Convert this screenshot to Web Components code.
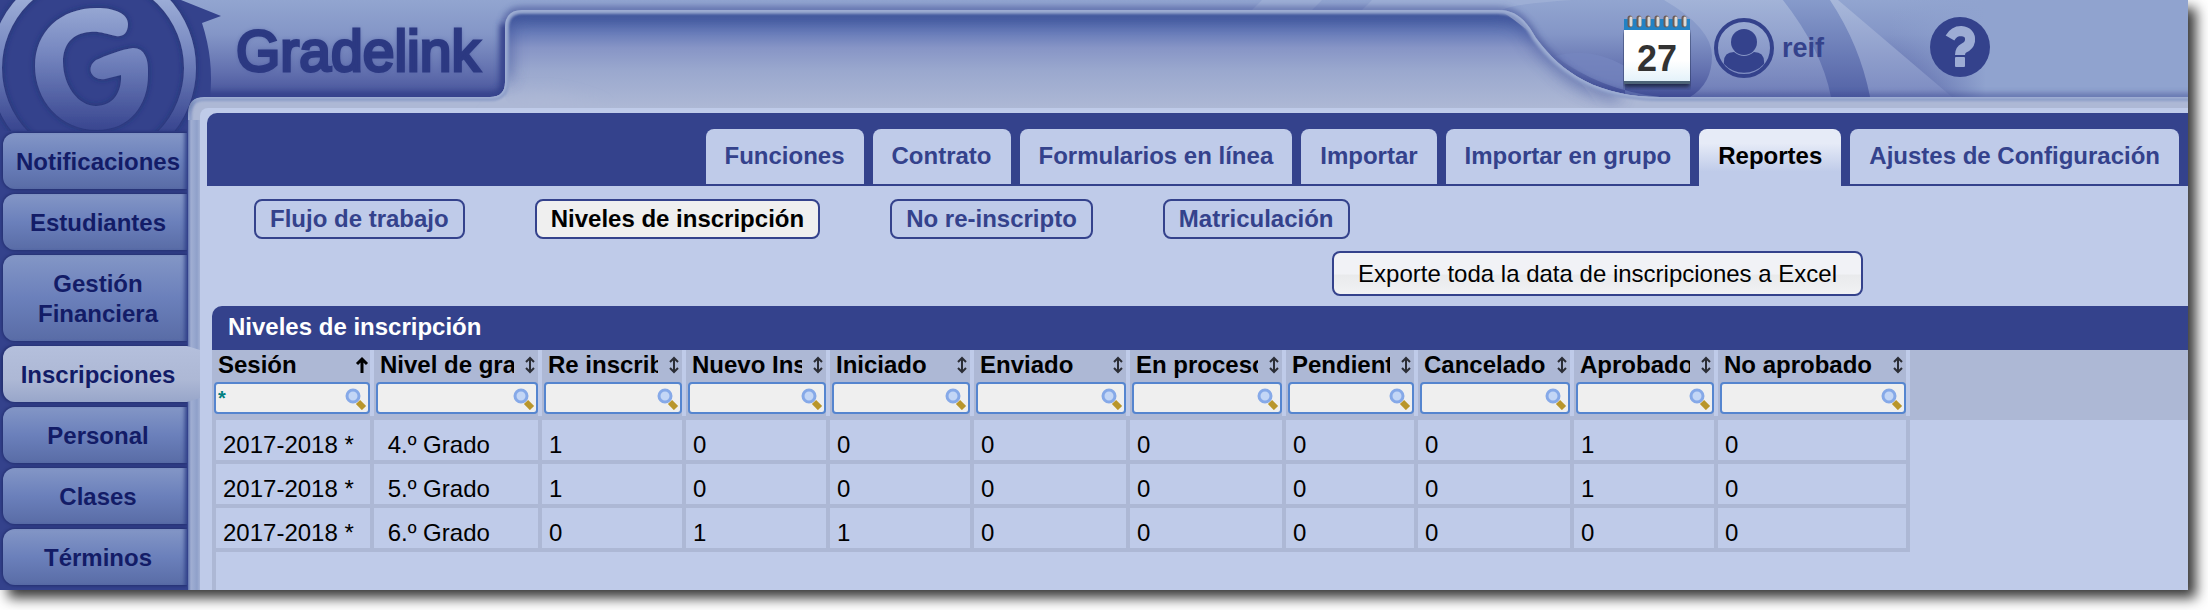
<!DOCTYPE html>
<html lang="es">
<head>
<meta charset="utf-8">
<title>Gradelink - Niveles de inscripción</title>
<style>
    :root {
        --navy: #34428c;
        --panel: #bfcbe9;
        --steel: #adb8d5;
        --ink: #131c67;
    }
    body {
        margin: 0;
        background: #fff;
        font-family: "Liberation Sans", Arial, sans-serif;
        font-size: 24px;
        line-height: 28px;
        overflow: hidden;
    }
</style>
</head>
<body>
<gl-app>
    <gl-banner slot="banner"></gl-banner>
    <gl-logo slot="side"></gl-logo>
    <gl-side-nav slot="side">
        <gl-side-item>Notificaciones</gl-side-item>
        <gl-side-item>Estudiantes</gl-side-item>
        <gl-side-item>Gestión Financiera</gl-side-item>
        <gl-side-item active>Inscripciones</gl-side-item>
        <gl-side-item>Personal</gl-side-item>
        <gl-side-item>Clases</gl-side-item>
        <gl-side-item>Términos</gl-side-item>
    </gl-side-nav>

    <gl-header slot="header" day="27">reif</gl-header>

    <gl-tabs>
        <gl-tab>Funciones</gl-tab>
        <gl-tab>Contrato</gl-tab>
        <gl-tab>Formularios en línea</gl-tab>
        <gl-tab>Importar</gl-tab>
        <gl-tab>Importar en grupo</gl-tab>
        <gl-tab active>Reportes</gl-tab>
        <gl-tab>Ajustes de Configuración</gl-tab>
    </gl-tabs>
    <gl-pills>
        <gl-pill>Flujo de trabajo</gl-pill>
        <gl-pill active>Niveles de inscripción</gl-pill>
        <gl-pill>No re-inscripto</gl-pill>
        <gl-pill>Matriculación</gl-pill>
    </gl-pills>
    <gl-export>Exporte toda la data de inscripciones a Excel</gl-export>
    <gl-grid>Niveles de inscripción</gl-grid>
</gl-app>

<script>
    // every component renders its own static template in an open shadow root
    class GlElement extends HTMLElement {
        constructor() {
            super()
            this.attachShadow({ mode: 'open' })
        }
        connectedCallback() {
            this.shadowRoot.innerHTML = this.render()
        }
    }

    class GlApp extends GlElement {
        render() {
            return `
            <style>
                :host {
                    display: grid;
                    grid-template-columns: 188px minmax(0, 1fr);
                    height: calc(100vh - 20px);
                    margin: 0 20px 20px 0;
                    position: relative;
                    overflow: hidden;
                    background: var(--navy);
                    box-shadow: 8px 8px 12px rgba(0, 0, 0, .78);
                }
                aside, .body { position: relative; min-width: 0; }
                aside { z-index: 1; }
                .body { display: flex; flex-direction: column; }
                .frame {
                    flex: 1;
                    display: flex;
                    padding-left: 12px;
                    background: linear-gradient(90deg, #6376af 0, #a0aed2 3px, #98a8cf 6px, #8fa0c9 9px, #a3b1d4 12px) 0 12px no-repeat;
                }
                main {
                    flex: 1;
                    min-width: 0;
                    display: flex;
                    flex-direction: column;
                    padding: 5px 0 0 7px;
                    background: var(--panel);
                    border-top-left-radius: 8px;
                }
            </style>
            <slot name="banner"></slot>
            <aside><slot name="side"></slot></aside>
            <div class="body">
                <slot name="header"></slot>
                <div class="frame"><main><slot></slot></main></div>
            </div>`
        }
    }

    // decorative artwork behind the logo and the header
    class GlBanner extends GlElement {
        render() {
            const edge = 'M188 140V113Q188 97 204 97H490Q505 97 505 82V28Q505 10 522 10H1498C1516 10 1526 20 1536 38C1562 74 1600 97 1660 97H4000'
            return `
            <style>
                :host { position: absolute; top: 0; left: 0; right: 0; height: 130px; overflow: hidden; }
                svg { display: block; width: 100%; height: 130px; }
            </style>
            <svg aria-hidden="true">
                <defs>
                    <linearGradient id="sky" x1="0" y1="0" x2="0" y2="97" gradientUnits="userSpaceOnUse">
                        <stop offset="0" stop-color="#92a5d0"/><stop offset=".35" stop-color="#8496c7"/>
                        <stop offset=".75" stop-color="#616fae"/><stop offset="1" stop-color="#46529a"/>
                    </linearGradient>
                    <linearGradient id="well" x1="0" y1="14" x2="0" y2="108" gradientUnits="userSpaceOnUse">
                        <stop offset="0" stop-color="#455c9f"/><stop offset=".06" stop-color="#4b62a5"/><stop offset=".2" stop-color="#687cb9"/>
                        <stop offset=".36" stop-color="#8795c6"/><stop offset=".6" stop-color="#9aa8ce"/>
                        <stop offset="1" stop-color="#adb8d5"/>
                    </linearGradient>
                    <linearGradient id="far" x1="1890" x2="2050" y1="0" y2="0" gradientUnits="userSpaceOnUse">
                        <stop offset="0" stop-color="#90a3cf" stop-opacity="0"/><stop offset=".6" stop-color="#90a3cf"/>
                    </linearGradient>
                    <linearGradient id="beam" x1="0" x2="0" y1="0" y2="1">
                        <stop offset="0" stop-color="#a8b8da"/><stop offset="1" stop-color="#7c8bc1"/>
                    </linearGradient>
                    <linearGradient id="band" x1="0" x2="0" y1="0" y2="1">
                        <stop offset="0" stop-color="#879bcb"/><stop offset="1" stop-color="#5362a6"/>
                    </linearGradient>
                    <filter id="b1" x="-10%" y="-60%" width="120%" height="220%"><feGaussianBlur stdDeviation="1"/></filter>
                    <filter id="b2" x="-10%" y="-60%" width="120%" height="220%"><feGaussianBlur stdDeviation="3"/></filter>
                    <filter id="b8" x="-10%" y="-60%" width="120%" height="220%"><feGaussianBlur stdDeviation="8"/></filter>
                    <clipPath id="shape"><path d="${edge}V140Z"/></clipPath>
                </defs>
                <rect width="4000" height="130" fill="url(#sky)"/>
                <path d="M1262 0h60l-10 10h-60zM1372 0h200q-60 4-70 10h-140z" fill="#a5b5d9" opacity=".6"/>
                <path d="M1555 56Q1590 46 1625 66V97H1660Q1600 90 1555 56z" fill="#7586bf" opacity=".8"/>
                <path d="M1664 0Q1712 28 1712 56Q1712 84 1690 97H1835Q1825 50 1783 0z" fill="url(#beam)" opacity=".75"/>
                <path d="M1783 0Q1822 50 1831 97H1870Q1860 45 1830 0z" fill="url(#band)"/>
                <path d="M1800 0H4000V97H1870Q1860 45 1830 0z" fill="url(#far)"/>
                <path d="M1830 0Q1860 45 1870 97H1952L1838 0z" fill="url(#beam)"/>
                <path d="${edge}" fill="none" stroke="#34428c" stroke-width="6" opacity=".6" filter="url(#b2)"/>
                <path d="M188 140V113Q188 97 204 97H490Q505 97 505 82V24" fill="none" stroke="#34428c" stroke-width="10" filter="url(#b2)"/>
                <path d="${edge}V140H188Z" fill="#adb8d5"/>
                <g clip-path="url(#shape)">
                    <path d="M505 97V10H1500Q1560 50 1600 108H540Q505 108 505 97z" fill="url(#well)"/>
                    <path d="M470 150L505 102Q545 86 600 110V150z" fill="#adb8d5" filter="url(#b8)"/>
                    <path d="M505 80V28Q505 10 522 10H1498C1516 10 1526 20 1536 38C1562 74 1590 90 1620 94" fill="none" stroke="#3c5099" stroke-width="14" opacity=".6" filter="url(#b8)"/>
                    <path d="${edge}" fill="none" stroke="#8b9cc8" stroke-width="8" filter="url(#b1)"/>
                    <path d="${edge}" fill="none" stroke="#a3b2d6" stroke-width="3" filter="url(#b1)"/>
                </g>
            </svg>`
        }
    }

    class GlLogo extends GlElement {
        render() {
            return `
            <style>
                :host { display: block; height: 133px; }
                svg { position: absolute; top: 0; left: 0; }
                .name {
                    position: absolute;
                    top: 16px;
                    left: 236px;
                    font-size: 57px;
                    line-height: 70px;
                    color: #2c3982;
                    -webkit-text-stroke: 3px #2c3982;
                    text-shadow: 0 0 4px #4a589f;
                }
            </style>
            <svg width="224" height="131" viewBox="0 0 224 131" aria-hidden="true">
                <defs>
                    <linearGradient id="g" x1="0" y1="0" x2="0" y2="131" gradientUnits="userSpaceOnUse">
                        <stop offset="0" stop-color="#9bacd6"/><stop offset=".4" stop-color="#7687c0"/><stop offset="1" stop-color="#38458f"/>
                    </linearGradient>
                    <filter id="s" x="-20%" y="-20%" width="140%" height="140%">
                        <feDropShadow dx="0" dy="0" stdDeviation="3" flood-color="#1d2a68" flood-opacity=".8"/>
                    </filter>
                </defs>
                <path d="M0 0H181L221 16L202 23Q214 60 210 97H204Q188 97 188 113V131H0z" fill="#34428c"/>
                <circle cx="93" cy="68" r="97" fill="none" stroke="url(#g)" stroke-width="12" filter="url(#s)"/>
                <path d="M116 36C105 34 100 31 90 32C72 33 63 45 63 62C63 85 78 106 96 106C113 106 122 92 121 75L105 79C92 81 85 68 96 60C105 56 122 49 133 48C145 48 149 60 148 75C148 105 130 130 97 130C60 130 35 100 35 66C35 32 60 8 97 8C115 8 128 14 128 24C128 34 122 37 116 36Z" fill="url(#g)" filter="url(#s)"/>
            </svg>
            <span class="name">Gradelink</span>`
        }
    }

    class GlSideNav extends GlElement {
        render() {
            return `
            <style>
                :host { display: block; }
                nav { display: flex; flex-direction: column; gap: 5px; padding-left: 3px; }
            </style>
            <nav><slot></slot></nav>`
        }
    }

    class GlSideItem extends GlElement {
        render() {
            return `
            <style>
                :host { display: block; margin-right: 1px; position: relative; }
                a {
                    display: flex;
                    align-items: center;
                    justify-content: center;
                    box-sizing: border-box;
                    min-height: 56px;
                    padding: 14px 4px 12px 10px;
                    border-radius: 12px 0 0 12px;
                    color: var(--ink);
                    font-weight: bold;
                    line-height: 30px;
                    text-align: center;
                    text-decoration: none;
                    background: linear-gradient(#8396c6, #6b80bb 50%, #596ca6);
                    box-shadow: inset -5px 0 4px -3px #2f3f88, 0 0 3px 1px #232f70;
                    clip-path: inset(-4px 0 -4px -4px);
                }
                :host([active]) { margin-right: -12px; }
                :host([active]) a {
                    padding-right: 17px;
                    background: linear-gradient(#b4bfdc, #adb8d5 60%, #98a6ca);
                    box-shadow: -1px 0 3px 1px #232f70;
                    clip-path: polygon(-4px -4px, 184px -4px, 184px 0, 100% 4px, 100% 52px, 184px 56px, 184px 60px, -4px 60px);
                }
            </style>
            <a href="#"><slot></slot></a>`
        }
    }

    class GlHeader extends GlElement {
        render() {
            return `
            <style>
                :host {
                    display: flex;
                    align-items: flex-start;
                    justify-content: flex-end;
                    height: 108px;
                    box-sizing: border-box;
                    padding: 14px 198px 0 0;
                    color: var(--navy);
                    font-weight: bold;
                }
                a { display: flex; align-items: center; color: inherit; text-decoration: none; }
                svg { display: block; }
                .day { position: relative; width: 68px; height: 76px; margin-right: 23px; }
                .day svg { position: absolute; inset: 0; }
                .day span {
                    position: relative;
                    width: 100%;
                    padding-top: 14px;
                    text-align: center;
                    font-size: 36px;
                    line-height: 40px;
                    color: #333;
                }
                .user { gap: 8px; margin: 4px 106px 0 0; font-size: 27px; }
                .help { margin-top: 3px; }
            </style>
            <a class="day" href="#" aria-label="Calendario">
                <svg width="68" height="76" viewBox="0 0 68 76">
                    <defs>
                        <linearGradient id="pg" x1="0" y1="0" x2="0" y2="1"><stop offset=".6" stop-color="#fff"/><stop offset="1" stop-color="#e4f2fa"/></linearGradient>
                        <filter id="sh" x="-20%" y="-20%" width="140%" height="140%"><feGaussianBlur stdDeviation="2"/></filter>
                    </defs>
                    <rect x="1" y="18" width="66" height="55" fill="#1c2546" filter="url(#sh)"/>
                    <rect x="1" y="5" width="66" height="12" fill="#2282c4"/>
                    <rect x="1" y="16" width="66" height="51" fill="url(#pg)"/>
                    <path d="M1 67h66v3H1z" fill="#4d6478"/>
                    <g stroke="#6b5c58" stroke-width="5" stroke-linecap="round"><path d="M7 4v7M16 4v7M25 4v7M34 4v7M43 4v7M52 4v7M61 4v7"/></g>
                    <g stroke="#dcd9d6" stroke-width="3" stroke-linecap="round"><path d="M8 4v7M17 4v7M26 4v7M35 4v7M44 4v7M53 4v7M62 4v7"/></g>
                </svg>
                <span>${this.getAttribute('day')}</span>
            </a>
            <a class="user" href="#">
                <svg width="60" height="60" viewBox="0 0 60 60">
                    <circle cx="30" cy="30" r="28" fill="none" stroke="#34428c" stroke-width="4"/>
                    <circle cx="30" cy="24" r="13" fill="#34428c"/>
                    <path d="M10 46Q9 34 20 34Q30 42 40 34Q51 34 50 46A27 27 0 0 1 10 46z" fill="#34428c"/>
                </svg>
                <slot></slot>
            </a>
            <a class="help" href="#" aria-label="Ayuda">
                <svg width="60" height="60" viewBox="0 0 60 60">
                    <circle cx="30" cy="30" r="30" fill="#34428c"/>
                    <path d="M20 21Q24 14 31 14Q41 15 40 24Q39 29 34 31Q30 33 30 38" fill="none" stroke="#9dacd4" stroke-width="10"/>
                    <rect x="25" y="40" width="10" height="10" rx="1" fill="#9dacd4"/>
                </svg>
            </a>`
        }
    }

    class GlTabs extends GlElement {
        render() {
            return `
            <style>
                :host { display: block; }
                nav {
                    display: flex;
                    justify-content: flex-end;
                    gap: 9px;
                    height: 57px;
                    padding: 16px 9px 0 0;
                    background: var(--navy);
                    border-top-left-radius: 10px;
                }
            </style>
            <nav><slot></slot></nav>`
        }
    }

    class GlTab extends GlElement {
        render() {
            return `
            <style>
                :host { display: block; }
                a {
                    display: block;
                    padding: 13px 19px 14px;
                    border-radius: 8px 8px 0 0;
                    background: var(--panel);
                    color: var(--navy);
                    font-weight: bold;
                    white-space: nowrap;
                    text-decoration: none;
                }
                :host([active]) a {
                    padding-bottom: 16px;
                    color: #000;
                    background: linear-gradient(#e6ebf7 25%, var(--panel) 75%);
                }
            </style>
            <a href="#"><slot></slot></a>`
        }
    }

    class GlPills extends GlElement {
        render() {
            return `
            <style>
                :host { display: flex; gap: 70px; padding: 13px 0 0 47px; }
            </style>
            <slot></slot>`
        }
    }

    class GlPill extends GlElement {
        render() {
            return `
            <style>
                :host { display: block; }
                a {
                    display: block;
                    padding: 4px 14px;
                    border: 2px solid var(--navy);
                    border-radius: 8px;
                    color: var(--navy);
                    font-weight: bold;
                    white-space: nowrap;
                    text-decoration: none;
                }
                :host([active]) a { background: #efefef; color: #000; }
            </style>
            <a href="#"><slot></slot></a>`
        }
    }

    class GlExport extends GlElement {
        render() {
            return `
            <style>
                :host { display: flex; justify-content: flex-end; padding: 12px 325px 10px 0; }
                button {
                    padding: 7px 24px 6px;
                    border: 2px solid var(--navy);
                    border-radius: 8px;
                    background: linear-gradient(#f1f2f6 50%, #e9eaec 55%, #f1f2f4);
                    color: #000;
                    font: inherit;
                }
            </style>
            <button type="button"><slot></slot></button>`
        }
    }

    class GlGrid extends GlElement {
        render() {
            const cols = [
                ['Sesión', 162], ['Nivel de grado', 168], ['Re inscrib', 144], ['Nuevo Ins', 144],
                ['Iniciado', 144], ['Enviado', 156], ['En proceso', 156], ['Pendiente', 132],
                ['Cancelado', 156], ['Aprobado', 144], ['No aprobado', 192]
            ]
            const rows = [
                ['2017-2018 *', '&nbsp;4.º Grado', 1, 0, 0, 0, 0, 0, 0, 1, 0],
                ['2017-2018 *', '&nbsp;5.º Grado', 1, 0, 0, 0, 0, 0, 0, 1, 0],
                ['2017-2018 *', '&nbsp;6.º Grado', 0, 1, 1, 0, 0, 0, 0, 0, 0]
            ]
            const up = '<svg width="14" height="18" viewBox="0 0 14 18"><path d="M7 17V4M2 8L7 3L12 8" fill="none" stroke="#000" stroke-width="3"/></svg>'
            const both = '<svg width="14" height="18" viewBox="0 0 14 18"><path d="M7 3V15M3 6L7 2L11 6M3 12L7 16L11 12" fill="none" stroke="#2b2d35" stroke-width="2"/></svg>'
            const lens = '<svg class="lens" width="22" height="22" viewBox="0 0 22 22"><path d="M13 14L19 20" stroke="#b9962b" stroke-width="6"/><circle cx="8" cy="8" r="6" fill="#c3d6f6" stroke="#86a9e8" stroke-width="3"/></svg>'

            const head = cols.map(([name], i) => `
                <th scope="col">
                    <button type="button"><span>${name}</span>${i ? both : up}</button>
                    <div class="filter"><input type="text" aria-label="Filtrar ${name}" value="${i ? '' : '*'}">${lens}</div>
                </th>`).join('')
            const body = rows.map(r => `<tr>${r.map(c => `<td>${c}</td>`).join('')}</tr>`).join('')

            return `
            <style>
                :host { flex: 1; display: flex; flex-direction: column; min-height: 0; margin-left: 5px; }
                h2 {
                    margin: 0;
                    padding: 7px 16px 9px;
                    border-top-left-radius: 10px;
                    background: var(--navy);
                    color: #fff;
                    font-size: 24px;
                    line-height: 28px;
                }
                .wrap { background: linear-gradient(var(--steel) 70px, var(--panel) 70px); }
                .rest { flex: 1; border-left: 4px solid var(--steel); }
                table { table-layout: fixed; width: 1698px; border-collapse: separate; border-spacing: 0; }
                th {
                    height: 66px;
                    padding: 0;
                    border-right: 4px solid var(--panel);
                    vertical-align: top;
                    box-sizing: border-box;
                }
                button {
                    display: flex;
                    align-items: center;
                    width: 100%;
                    padding: 1px 0 0 6px;
                    border: 0;
                    background: none;
                    color: #000;
                    font: inherit;
                    font-weight: bold;
                    text-align: left;
                }
                button span { flex: 1; min-width: 0; margin-right: 9px; overflow: hidden; white-space: nowrap; }
                button svg { flex: none; margin-right: 1px; }
                .filter { position: relative; padding: 3px 0 0 2px; }
                input {
                    display: block;
                    box-sizing: border-box;
                    width: 100%;
                    height: 32px;
                    padding: 0 28px 0 2px;
                    border: 2px solid #5585cf;
                    border-radius: 4px;
                    background: #efefef;
                    color: #008080;
                    font: bold 20px "Liberation Sans", Arial, sans-serif;
                }
                .lens { position: absolute; right: 3px; bottom: 4px; }
                td {
                    height: 31px;
                    padding: 9px 0 0 7px;
                    border: 0 solid var(--steel);
                    border-width: 0 4px 4px 0;
                    white-space: nowrap;
                    line-height: 31px;
                }
                td:first-child { border-left-width: 4px; }
                tbody tr:first-child td { border-top-width: 4px; }
            </style>
            <h2><slot></slot></h2>
            <div class="wrap">
                <table>
                    <colgroup>${cols.map(c => `<col style="width:${c[1]}px">`).join('')}</colgroup>
                    <thead><tr>${head}</tr></thead>
                    <tbody>${body}</tbody>
                </table>
            </div>
            <div class="rest"></div>`
        }
    }

    customElements.define('gl-app', GlApp)
    customElements.define('gl-banner', GlBanner)
    customElements.define('gl-logo', GlLogo)
    customElements.define('gl-side-nav', GlSideNav)
    customElements.define('gl-side-item', GlSideItem)
    customElements.define('gl-header', GlHeader)
    customElements.define('gl-tabs', GlTabs)
    customElements.define('gl-tab', GlTab)
    customElements.define('gl-pills', GlPills)
    customElements.define('gl-pill', GlPill)
    customElements.define('gl-export', GlExport)
    customElements.define('gl-grid', GlGrid)
</script>
</body>
</html>
